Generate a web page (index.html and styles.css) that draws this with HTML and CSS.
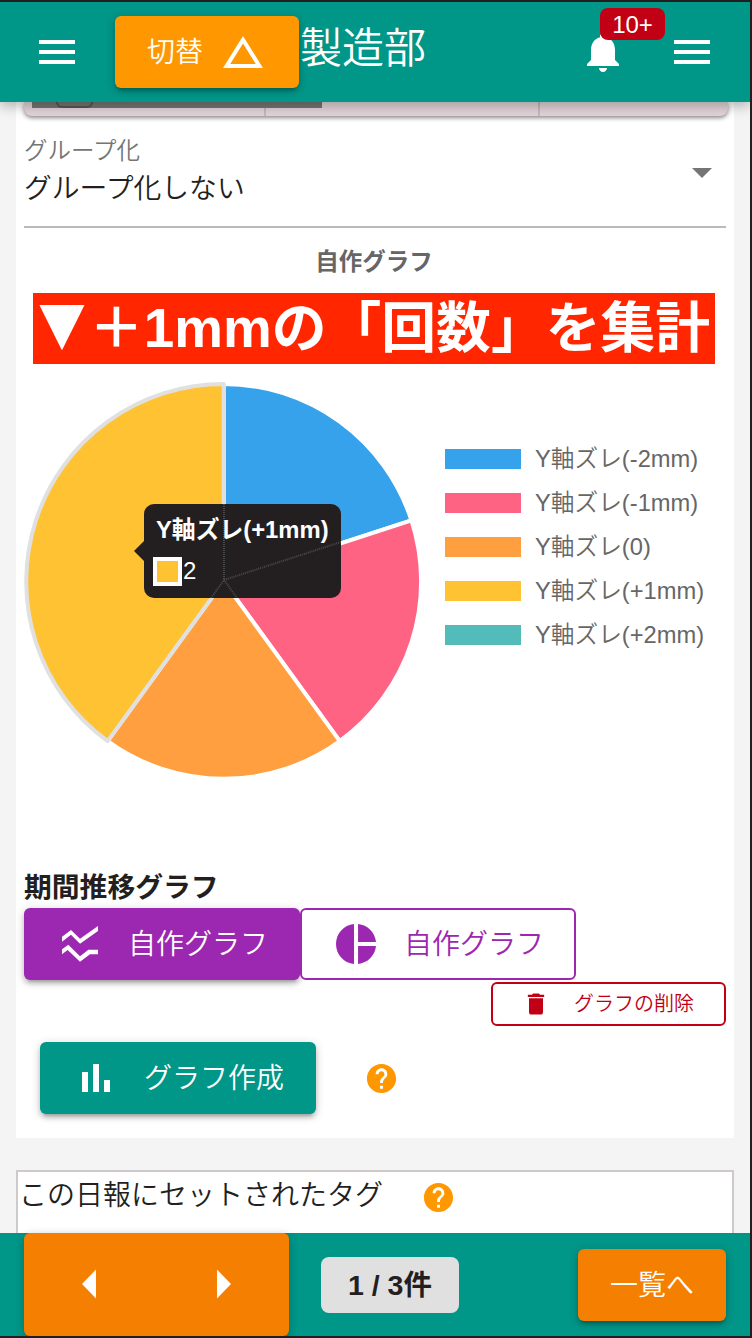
FILE: index.html
```html
<!DOCTYPE html>
<html lang="ja">
<head>
<meta charset="utf-8">
<title>製造部</title>
<link rel="stylesheet" href="styles.css">
</head>
<body>
<div class="screen">
  <header class="header">
    <svg class="icon menu-left" viewBox="0 0 24 24"><path d="M3 6h18v2H3zM3 11h18v2H3zM3 16h18v2H3z"/></svg>
    <button class="btn switch"><span>切替</span><svg class="icon" viewBox="0 0 24 24"><path d="M12 7.77 18.39 18H5.61L12 7.77M12 4 2 20h20z"/></svg></button>
    <h1 class="dept">製造部</h1>
    <div class="bell">
      <svg class="icon" viewBox="0 0 24 24"><path d="M12 22c1.1 0 2-.9 2-2h-4c0 1.1.9 2 2 2zm6-6v-5c0-3.07-1.63-5.64-4.5-6.32V4c0-.83-.67-1.5-1.5-1.5s-1.5.67-1.5 1.5v.68C7.64 5.36 6 7.92 6 11v5l-2 2v1h16v-1l-2-2z"/></svg>
      <span class="badge">10+</span>
    </div>
    <svg class="icon menu-right" viewBox="0 0 24 24"><path d="M3 6h18v2H3zM3 11h18v2H3zM3 16h18v2H3z"/></svg>
  </header>

  <main class="content">
    <section class="card">
      <div class="table-end"><i class="scroll"><i class="knob"></i></i><i class="cell cell-a"></i><i class="cell cell-b"></i></div>
      <div class="select">
        <div class="select-text"><span class="select-label">グループ化</span><span class="select-value">グループ化しない</span></div>
        <svg class="icon caret" viewBox="0 0 24 24"><path d="M7 10l5 5 5-5z"/></svg>
      </div>
      <h2 class="chart-title">自作グラフ</h2>
      <div class="banner"><span class="marker">▼</span>＋1mmの「回数」を集計</div>
      <div class="chart">
        <svg class="pie" viewBox="0 0 404 404">
          <g stroke="#fff" stroke-width="4" stroke-linejoin="round" transform="translate(.3 1) scale(.997)">
            <path fill="#36a2eb" d="M200 203V5A198 198 0 0 1 388.3 141.8Z"/>
            <path fill="#ff6384" d="M200 203L388.3 141.8A198 198 0 0 1 316.4 363.2Z"/>
            <path fill="#ff9f40" d="M200 203L316.4 363.2A198 198 0 0 1 83.6 363.2Z"/>
            <path fill="#ffc233" stroke="#e0e0e0" d="M200 203L83.6 363.2A198 198 0 0 1 200 5Z"/>
          </g>
        </svg>
        <ul class="legend">
          <li><i class="key blue"></i><span>Y軸ズレ(-2mm)</span></li>
          <li><i class="key pink"></i><span>Y軸ズレ(-1mm)</span></li>
          <li><i class="key orange"></i><span>Y軸ズレ(0)</span></li>
          <li><i class="key yellow"></i><span>Y軸ズレ(+1mm)</span></li>
          <li><i class="key teal"></i><span>Y軸ズレ(+2mm)</span></li>
        </ul>
        <div class="tooltip">
          <svg class="spokes" viewBox="144 504 197 94"><path d="M224 504V580M341 542L224 580M211 598L224 580L237 598"/></svg>
          <strong>Y軸ズレ(+1mm)</strong>
          <div class="tip-row"><i class="tip-key"></i><span>2</span></div>
        </div>
      </div>
      <h3 class="trend-title">期間推移グラフ</h3>
      <div class="tabs">
        <button class="btn tab tab-on"><svg class="icon" viewBox="174 180 144 144"><path d="M186 230 213 210 240 236 294 198V213L240 251 213 224 186 245ZM186 268 205 254 240 289 265 269H294V283H270L240 305 203 270 186 283Z"/></svg><span>自作グラフ</span></button>
        <button class="btn tab tab-off"><svg class="icon" viewBox="0 0 24 24"><path d="M11 2v20c-5.07-.5-9-4.79-9-10s3.93-9.5 9-10zm2.03 0v8.99H22c-.47-4.74-4.24-8.52-8.97-8.99zm0 11.01V22c4.74-.47 8.5-4.25 8.97-8.99h-8.97z"/></svg><span>自作グラフ</span></button>
      </div>
      <div class="delete-row">
        <button class="btn delete"><svg class="icon" viewBox="0 0 24 24"><path d="M6 19c0 1.1.9 2 2 2h8c1.1 0 2-.9 2-2V7H6v12zM19 4h-3.5l-1-1h-5l-1 1H5v2h14V4z"/></svg><span>グラフの削除</span></button>
      </div>
      <div class="create-row">
        <button class="btn create"><svg class="icon" viewBox="0 0 48 48"><path d="M10 18h6v20h-6zM21 10h6v28h-6zM32 26h6v12h-6z"/></svg><span>グラフ作成</span></button>
        <svg class="icon help" viewBox="0 0 24 24"><path d="M12 2C6.48 2 2 6.48 2 12s4.48 10 10 10 10-4.48 10-10S17.52 2 12 2zm1 17h-2v-2h2v2zm2.07-7.75l-.9.92C13.45 12.9 13 13.5 13 15h-2v-.5c0-1.1.45-2.1 1.17-2.83l1.24-1.26c.37-.36.59-.86.59-1.41 0-1.1-.9-2-2-2s-2 .9-2 2H8c0-2.21 1.79-4 4-4s4 1.79 4 4c0 .88-.36 1.68-.93 2.25z"/></svg>
      </div>
    </section>
    <section class="tags">
      <span>この日報にセットされたタグ</span>
      <svg class="icon help" viewBox="0 0 24 24"><path d="M12 2C6.48 2 2 6.48 2 12s4.48 10 10 10 10-4.48 10-10S17.52 2 12 2zm1 17h-2v-2h2v2zm2.07-7.75l-.9.92C13.45 12.9 13 13.5 13 15h-2v-.5c0-1.1.45-2.1 1.17-2.83l1.24-1.26c.37-.36.59-.86.59-1.41 0-1.1-.9-2-2-2s-2 .9-2 2H8c0-2.21 1.79-4 4-4s4 1.79 4 4c0 .88-.36 1.68-.93 2.25z"/></svg>
    </section>
  </main>

  <footer class="footer">
    <div class="pager">
      <svg class="icon" viewBox="0 0 48 48"><path d="M31 9.500V38.500L17 24z"/></svg>
      <svg class="icon" viewBox="0 0 48 48"><path d="M17 9.500V38.500L31 24z"/></svg>
    </div>
    <div class="count">1 / 3件</div>
    <button class="btn list"><span>一覧へ</span></button>
  </footer>
</div>
</body>
</html>
```
FILE: styles.css
```css
* { box-sizing: border-box; }
body {
  margin: 0;
  color: #231f20;
  font-family: "Liberation Sans", "Noto Sans CJK JP", sans-serif;
  font-size: 28px;
}
h1, h2, h3, ul { margin: 0; padding: 0; }
i { display: block; font-style: normal; }
.screen {
  width: 752px;
  height: 1338px;
  border: solid #231f20;
  border-width: 2px 2px 2px 0;
  background: #f4f4f4;
  display: flex;
  flex-direction: column;
  overflow: hidden;
}
.icon { width: 48px; height: 48px; fill: currentColor; flex: none; display: block; }
.btn {
  font: 350 28px/1 "Liberation Sans", "Noto Sans CJK JP DemiLight", "Noto Sans CJK JP", sans-serif;
  border: 0;
  border-radius: 6px;
  padding: 0;
  color: #fff;
  display: flex;
  align-items: center;
  box-shadow: 0 2px 10px rgba(0,0,0,.2), 0 4px 4px rgba(0,0,0,.14), 0 6px 2px -4px rgba(0,0,0,.12);
}
.btn span { white-space: nowrap; padding-top: 2px; }

/* Header */
.header {
  height: 100px;
  flex: none;
  background: #009688;
  color: #fff;
  display: flex;
  align-items: center;
  padding-left: 33px;
  position: relative;
  z-index: 2;
  box-shadow: 0 4px 12px rgba(0,0,0,.28);
}
.switch { width: 184px; height: 72px; margin-left: 34px; padding-left: 32px; gap: 16px; background: #ff9800; }
.dept { font-size: 42px; font-weight: 350; line-height: 60px; margin-left: 1px; width: 279px; padding-bottom: 6px; }
.bell { position: relative; }
.badge {
  position: absolute;
  left: 21px;
  top: -20px;
  width: 65px;
  height: 32px;
  border-radius: 8px;
  background: #c10015;
  font-size: 24px;
  line-height: 33px;
  text-align: center;
}
.menu-right { margin-left: 41px; }

/* Content */
.content { flex: 1; min-height: 0; overflow: hidden; padding: 0 16px; }
.card { height: 1036px; background: #fff; padding: 0 8px; }
.table-end {
  height: 14px;
  width: 704px;
  background: #e2d3d8;
  border-radius: 0 0 8px 8px;
  box-shadow: 0 2px 4px rgba(0,0,0,.45);
  display: flex;
}
.scroll { width: 290px; height: 6px; margin-left: 8px; background: #757575; flex: none; }
.knob { width: 37px; height: 6px; margin-left: 24px; border: 2px solid #555; border-top: 0; border-radius: 0 0 6px 6px; }
.cell { width: 2px; background: #c4b9bc; }
.cell-a { height: 8px; margin: 6px 0 0 -58px; }
.cell-b { margin-left: 272px; }
.select { height: 112px; width: 702px; border-bottom: 2px solid #bdb9ba; display: flex; justify-content: space-between; }
.select-text { display: flex; flex-direction: column; padding-top: 18px; }
.select-label { font-size: 23.500px; line-height: 34px; color: #757575; font-weight: 350; }
.select-value { font-size: 27.800px; line-height: 41px; font-weight: 350; }
.caret { margin-top: 32px; color: #757575; }
.chart-title { height: 65px; padding-top: 16px; font-size: 23.500px; line-height: 36px; color: #666; text-align: center; width: 700px; }
.banner {
  width: 682px;
  height: 71px;
  margin-left: 9px;
  padding-left: 2px;
  background: #ff2600;
  color: #fff;
  font: bold 54.800px/70px "Liberation Sans", "Noto Sans CJK JP", sans-serif;
  white-space: nowrap;
}
.marker { display: inline-block; width: 54px; font: 59px/0 "DejaVu Sans", sans-serif; text-align: center; vertical-align: 4px; }
.chart { height: 502px; position: relative; display: flex; padding-top: 14px; }
.pie { width: 404px; height: 404px; flex: none; }
.legend { list-style: none; margin-left: 17px; padding-top: 59px; color: #666; font-size: 23.700px; font-weight: 350; }
.legend li { height: 44px; display: flex; align-items: center; gap: 14px; white-space: nowrap; }
.legend span { padding-bottom: 5px; }
.key { width: 76px; height: 20px; }
.blue { background: #36a2eb; }
.pink { background: #ff6384; }
.orange { background: #ff9f40; }
.yellow { background: #ffc233; }
.teal { background: #53bbb9; }
.tooltip {
  position: absolute;
  left: 120px;
  top: 140px;
  width: 197px;
  height: 94px;
  padding: 9px 0 0 12px;
  border-radius: 10px;
  background: #231f20;
  color: #fff;
  font-size: 24px;
  line-height: 34px;
}
.tooltip::before {
  content: "";
  position: absolute;
  left: -10px;
  top: 37px;
  border: solid transparent;
  border-width: 10px 10px 10px 0;
  border-right-color: #231f20;
}
.tooltip strong { position: relative; white-space: nowrap; display: block; font-size: 23.800px; }
.spokes { position: absolute; left: 0; top: 0; width: 197px; height: 94px; fill: none; stroke: #4a4b4b; stroke-width: 2; stroke-dasharray: 1 1; }
.tip-row { display: flex; align-items: center; margin: 7px 0 0 -3px; position: relative; }
.tip-key { width: 29px; height: 29px; border: 4px solid #fff; background: #ffc233; }
.tip-row span { line-height: 34px; margin-left: 1px; }
.trend-title { height: 42px; font-size: 27.800px; line-height: 44px; }
.tabs { display: flex; width: 552px; }
.tab { width: 276px; height: 72px; padding-left: 34px; gap: 22px; }
.tab-on { background: #9c27b0; }
.tab-off { border: 2px solid #9c27b0; background: #fff; color: #9c27b0; box-shadow: none; padding-left: 30px; gap: 24px; }
.delete-row { display: flex; justify-content: flex-end; padding: 2px 0 16px; }
.delete { width: 235px; height: 44px; padding-left: 29px; gap: 24px; border: 2px solid #c10015; background: #fff; color: #c10015; font-size: 20px; box-shadow: none; }
.delete span { padding-top: 0; }
.delete .icon { width: 28px; height: 28px; }
.create-row { display: flex; align-items: center; padding-left: 16px; gap: 48px; }
.create { width: 276px; height: 72px; padding-left: 32px; gap: 24px; background: #009688; }
.help { width: 35px; height: 35px; color: #ff9800; }

/* Tags */
.tags { height: 120px; margin-top: 32px; border: 2px solid #cecaca; background: #fff; display: flex; align-items: flex-start; padding-left: 1px; }
.tags span { width: 402px; line-height: 47px; white-space: nowrap; font-weight: 350; }
.tags .help { margin-top: 8px; }

/* Footer */
.footer { height: 103px; flex: none; background: #009688; display: flex; align-items: center; padding: 0 24px; position: relative; z-index: 2; }
.pager {
  width: 265px;
  height: 103px;
  border-radius: 6px;
  background: #f57f00;
  color: #fff;
  display: flex;
  align-items: center;
  gap: 87px;
  padding: 0 0 2px 41px;
  box-shadow: 0 2px 8px rgba(0,0,0,.25);
}
.count { width: 138px; height: 56px; margin-left: 32px; border-radius: 8px; background: #e0e0e0; font-weight: bold; font-size: 28.500px; text-align: center; line-height: 57px; }
.list { width: 148px; height: 72px; margin-left: 119px; justify-content: center; background: #f57f00; }
```
